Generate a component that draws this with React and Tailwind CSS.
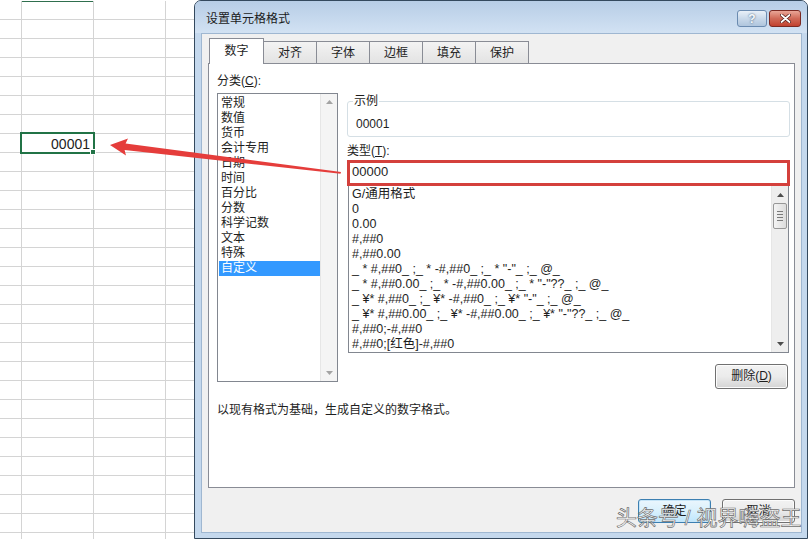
import React from "react";

const categories = [
  "常规",
  "数值",
  "货币",
  "会计专用",
  "日期",
  "时间",
  "百分比",
  "分数",
  "科学记数",
  "文本",
  "特殊",
  "自定义",
];

const formats = [
  "G/通用格式",
  "0",
  "0.00",
  "#,##0",
  "#,##0.00",
  '_ * #,##0_ ;_ * -#,##0_ ;_ * "-"_ ;_ @_',
  '_ * #,##0.00_ ;_ * -#,##0.00_ ;_ * "-"??_ ;_ @_',
  '_ ¥* #,##0_ ;_ ¥* -#,##0_ ;_ ¥* "-"_ ;_ @_',
  '_ ¥* #,##0.00_ ;_ ¥* -#,##0.00_ ;_ ¥* "-"??_ ;_ @_',
  "#,##0;-#,##0",
  "#,##0;[红色]-#,##0",
];

const tabs = ["数字", "对齐", "字体", "边框", "填充", "保护"];

// small scrollbar triangles
const Tri = ({ down, color }) => (
  <svg width="7" height="4" viewBox="0 0 7 4">
    <path d={down ? "M0 0 L7 0 L3.5 4 Z" : "M0 4 L3.5 0 L7 4 Z"} fill={color} />
  </svg>
);

const Sheet = () => {
  const rows = Array.from({ length: 29 });
  return (
    <div className="relative w-[194px] shrink-0 pt-px">
      <div className="grid grid-cols-[22px_72px_72px_28px]">
        {rows.map((_, r) => (
          <React.Fragment key={r}>
            <div className="h-[19px] border-r border-b border-[#d4d4d4]" />
            <div
              className={`h-[19px] border-r border-b border-[#d4d4d4] pr-[3px] pt-[2px] text-right text-[14px] leading-[17px] text-[#222] ${
                r === 0 ? "shadow-[inset_0_1px_0_#2f6f4e]" : ""
              }`}
            >
              {r === 7 ? "00001" : ""}
            </div>
            <div className="h-[19px] border-r border-b border-[#d4d4d4]" />
            <div className="h-[19px] border-b border-[#d4d4d4]" />
          </React.Fragment>
        ))}
      </div>
      {/* selected cell */}
      <div className="absolute left-[20px] top-[132px] h-[22px] w-[75px] border-2 border-[#217346]" />
      <div className="absolute left-[90px] top-[149px] h-[6px] w-[6px] border border-white bg-[#217346]" />
    </div>
  );
};

const WinButton = ({ children, primary, className = "" }) => (
  <button
    className={`flex items-center justify-center rounded-[3px] border text-[12px] leading-[15px] text-[#1e1e1e] ${
      primary
        ? "border-[#3c7fb1] bg-gradient-to-b from-[#eaf6fd] via-[#d9f0fc] to-[#bee6fd] shadow-[inset_0_0_0_1px_#c5e4f7]"
        : "border-[#707070] bg-gradient-to-b from-[#f2f2f2] via-[#ebebeb] to-[#d4d4d4] shadow-[inset_0_0_0_1px_#fcfcfc]"
    } ${className}`}
  >
    {children}
  </button>
);

const Dialog = () => (
  <div className="flex h-[539px] w-[614px] shrink-0 flex-col rounded-t-[7px] border border-[#34495e] bg-[#c4d8ed]">
    {/* Title bar */}
    <div className="flex h-[32px] items-start rounded-t-[6px] bg-gradient-to-b from-[#b7cde6] to-[#d2e2f3] pl-[11px] pr-[6px] pt-[9px]">
      <span className="mt-[1px] text-[12px] leading-[16px] text-[#1b1b1b]">设置单元格格式</span>
      <div className="ml-auto flex gap-[2px]">
        <div className="flex h-[17px] w-[30px] items-center justify-center rounded-[3px] border border-[#6b8bb0] bg-gradient-to-b from-[#e9f0f8] via-[#c9d9ea] to-[#afc5dd] text-[12px] font-bold leading-none text-[#f6f9fc] [text-shadow:0_0_2px_#2b4866]">
          ?
        </div>
        <div className="flex h-[17px] w-[32px] items-center justify-center rounded-[3px] border border-[#7b2a23] bg-gradient-to-b from-[#e9a697] via-[#d06a58] to-[#c2412f]">
          <svg width="11" height="9" viewBox="0 0 11 9">
            <path d="M1.5 1 L9.5 8 M9.5 1 L1.5 8" stroke="#4a1410" strokeWidth="3.2" strokeLinecap="round" />
            <path d="M1.5 1 L9.5 8 M9.5 1 L1.5 8" stroke="#ffffff" strokeWidth="1.8" strokeLinecap="round" />
          </svg>
        </div>
      </div>
    </div>

    {/* Client */}
    <div className="ml-[6px] mr-[5px] flex h-[500px] flex-col border border-[#9fb7d1] bg-[#f0f0f0] px-[6px] pt-[4px]">
      {/* Tabs */}
      <div className="flex h-[25px] items-end pl-[1px]">
        {tabs.map((t, i) =>
          i === 0 ? (
            <div
              key={t}
              className="relative z-10 -mb-px flex h-[26px] w-[55px] items-center justify-center border border-b-0 border-[#898c95] bg-white pb-[2px] text-[12px] text-[#1e1e1e]"
            >
              {t}
            </div>
          ) : (
            <div
              key={t}
              className="-ml-px flex h-[22px] w-[54px] items-center justify-center border border-b-0 border-[#898c95] bg-gradient-to-b from-[#f3f3f3] to-[#e3e3e3] text-[12px] text-[#1e1e1e]"
            >
              {t}
            </div>
          )
        )}
      </div>

      {/* Panel */}
      <div className="flex h-[425px] flex-col border border-[#898c95] bg-white pl-[8px] pt-[10px] text-[12px] leading-[15px] text-[#1e1e1e]">
        <div className="flex items-start gap-[9px]">
          {/* Left column */}
          <div className="flex w-[121px] flex-col">
            <div>
              分类(<span className="underline">C</span>):
            </div>
            <div className="mt-[4px] flex h-[289px] border border-[#828790] bg-white">
              <div className="flex-1 pl-px pt-[2px]">
                {categories.map((c) => (
                  <div
                    key={c}
                    className={`h-[15px] pl-[2px] ${c === "自定义" ? "bg-[#3399ff] text-white" : ""}`}
                  >
                    {c}
                  </div>
                ))}
              </div>
              <div className="flex w-[17px] flex-col items-center justify-between border-l border-[#e6e6e6] bg-[#f4f4f4] py-[6px]">
                <Tri color="#a3a3a3" />
                <Tri down color="#a3a3a3" />
              </div>
            </div>
          </div>

          {/* Right column */}
          <div className="flex w-[443px] flex-col">
            <fieldset className="mt-[20px] rounded-[3px] border border-[#d5dfe5] px-[5px] pb-[4px]">
              <legend className="px-[1px] leading-[15px]">示例</legend>
              <div className="mt-[8px] pl-[3px]">00001</div>
            </fieldset>
            <div className="mt-[7px]">
              类型(<span className="underline">T</span>):
            </div>
            <div className="mt-[1px] flex h-[26px] items-center border-[3px] border-[#d4403c] bg-white pb-[3px] pl-[2px] text-[13px] leading-[15px]">
              00000
            </div>
            <div className="mx-[1px] flex h-[167px] border border-t-0 border-[#828790] bg-white">
              <div className="flex-1 overflow-hidden whitespace-pre pl-[3px] pt-px text-[12.5px]">
                {formats.map((f) => (
                  <div key={f} className="h-[15px]">
                    {f}
                  </div>
                ))}
              </div>
              <div className="flex w-[17px] flex-col border-l border-[#e6e6e6] bg-[#eeeeee]">
                <div className="flex h-[17px] items-center justify-center">
                  <Tri color="#4d4d4d" />
                </div>
                <div className="mx-[1px] flex h-[26px] flex-col items-center justify-center gap-[2px] rounded-[2px] border border-[#979797] bg-gradient-to-r from-[#f4f4f4] to-[#dcdcdc]">
                  <div className="h-px w-[6px] bg-[#7a7a7a]" />
                  <div className="h-px w-[6px] bg-[#7a7a7a]" />
                  <div className="h-px w-[6px] bg-[#7a7a7a]" />
                  <div className="h-px w-[6px] bg-[#7a7a7a]" />
                </div>
                <div className="mt-auto flex h-[17px] items-center justify-center">
                  <Tri down color="#4d4d4d" />
                </div>
              </div>
            </div>
            <WinButton className="mr-[2px] mt-[11px] h-[25px] w-[73px] self-end">
              删除(<span className="underline">D</span>)
            </WinButton>
          </div>
        </div>
        <div className="mt-[14px]">以现有格式为基础，生成自定义的数字格式。</div>
      </div>

      {/* Buttons */}
      <div className="mt-[11px] flex justify-end gap-[11px]">
        <WinButton primary className="h-[24px] w-[73px]">
          确定
        </WinButton>
        <WinButton className="h-[24px] w-[73px]">取消</WinButton>
      </div>
    </div>
  </div>
);

const App = () => {
  return (
    <div className="relative flex h-[539px] w-[811px] overflow-hidden bg-white font-['Liberation_Sans','Noto_Sans_CJK_SC',sans-serif]">
      <Sheet />
      <Dialog />

      {/* red arrow pointing from the type box to the cell */}
      <svg
        className="pointer-events-none absolute left-0 top-0"
        width="811"
        height="539"
        viewBox="0 0 811 539"
      >
        <polygon
          points="110,145 128,138.5 125.6,143.6 341,172 340.5,173.8 124.6,150 126,155.5"
          fill="#e53d3b"
        />
      </svg>

      {/* watermark */}
      <div className="pointer-events-none absolute left-[616px] top-[503px] whitespace-pre text-[21px] leading-[30px] text-white [-webkit-text-stroke:0.7px_#6e6e6e]">
        头条号 / 视界嗨盗王
      </div>
    </div>
  );
};

export default App;
